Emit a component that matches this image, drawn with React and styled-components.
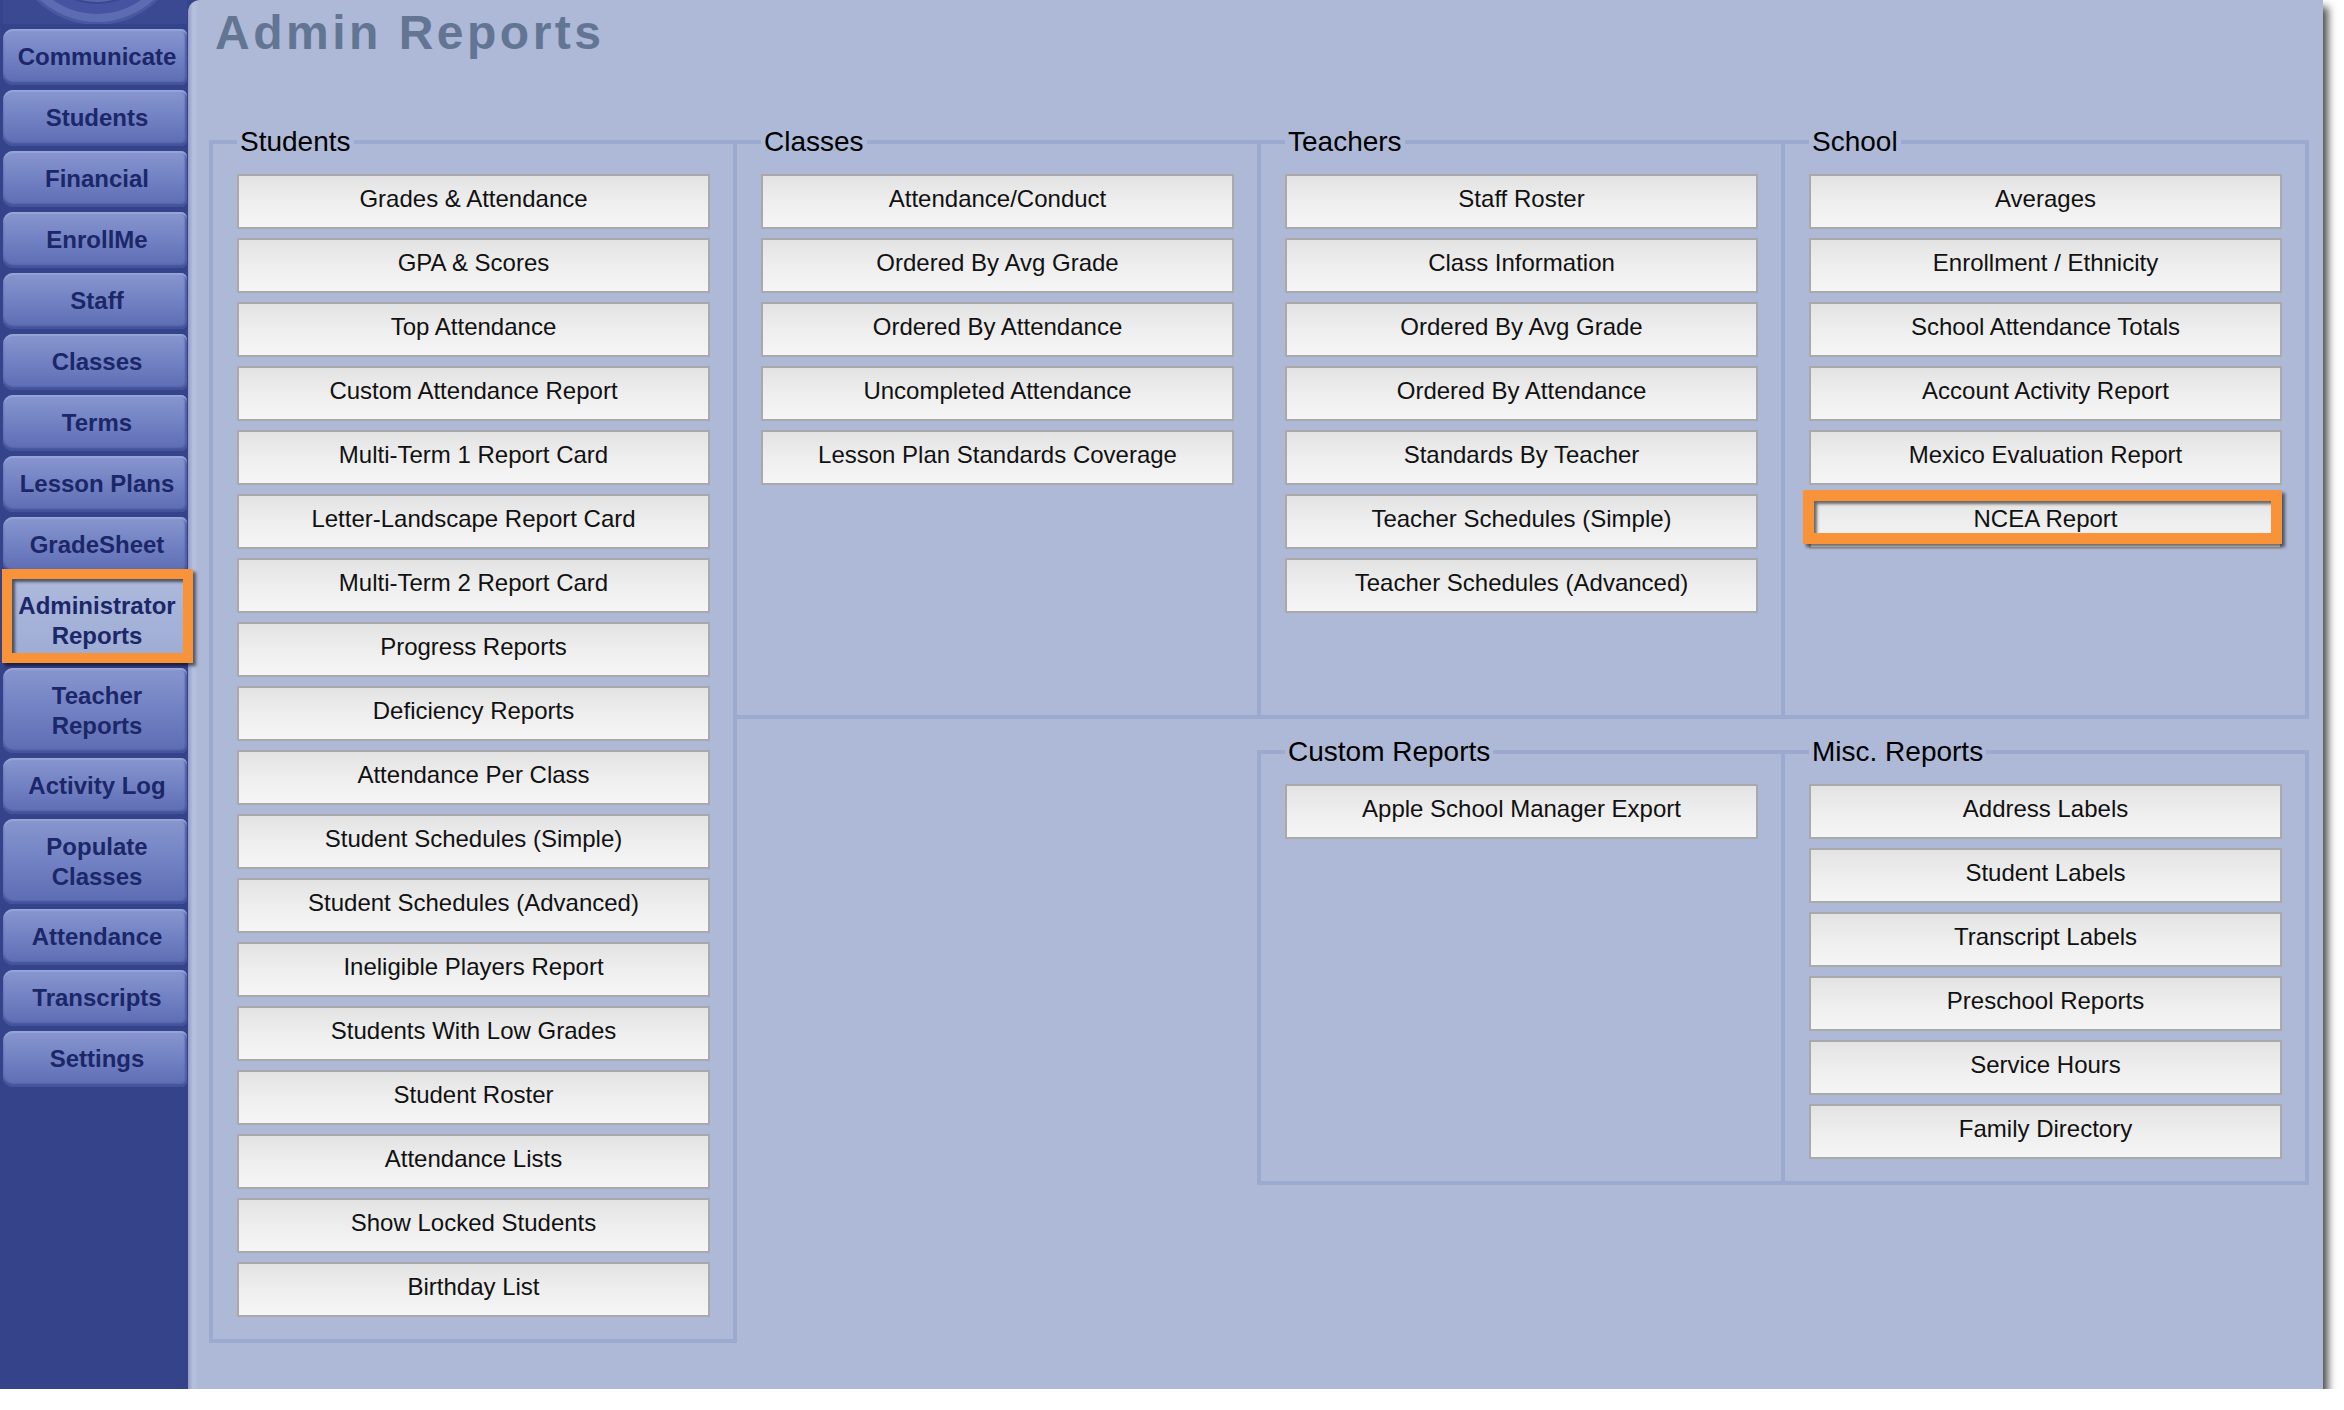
import React from "react";
import styled, { createGlobalStyle, css } from "styled-components";

const GlobalStyle = createGlobalStyle`
  html, body { margin: 0; padding: 0; background: #ffffff; }
  body { font-family: "Liberation Sans", Arial, sans-serif; }
  * { box-sizing: border-box; }
`;

const Window = styled.div`
  display: grid;
  grid-template-columns: 188px 2135px;
  width: 2323px;
  height: 1389px;
  background: #35438a;
  box-shadow: 5px 7px 8px rgba(0, 0, 0, 0.7);
`;

const Sidebar = styled.nav`
  display: flex;
  flex-direction: column;
  gap: 5px;
  padding: 0 1px 0 3px;
  background: #35438a;
`;

const LogoWrap = styled.div`
  height: 24px;
  overflow: hidden;
`;

const orangeFrame = css`
  &::after {
    content: "";
    position: absolute;
    border: 10px solid #f8933a;
    box-shadow: 3px 3px 3px rgba(0, 0, 0, 0.55), inset 3px 3px 3px rgba(0, 0, 0, 0.55);
    pointer-events: none;
  }
`;

const NavButton = styled.button`
  position: relative;
  height: ${(p) => (p.$tall ? 85 : 56)}px;
  border: none;
  padding: 0 0 0 4px;
  border-radius: 10px 6px 6px 10px;
  background: linear-gradient(#8896cf 0%, #7483c4 45%, #5d6cb3 100%);
  box-shadow: inset 0 -3px 2px #44529b, inset 0 2px 1px #97a4d9, inset -2px 0 2px #4f5da6;
  display: flex;
  flex-direction: column;
  align-items: center;
  justify-content: center;
  font-family: "Liberation Sans", Arial, sans-serif;
  font-weight: bold;
  font-size: 24px;
  line-height: 30px;
  color: #1b2768;
  cursor: pointer;

  ${(p) =>
    p.$active &&
    css`
      border-radius: 0;
      background: linear-gradient(#adb9dc, #9dabd4);
      box-shadow: none;
      ${orangeFrame}
      &::after {
        top: -9px;
        left: -1px;
        right: -6px;
        bottom: 0;
      }
    `}
`;

const Panel = styled.main`
  display: flex;
  flex-direction: column;
  padding: 5px 0 0 21px;
  border-top-left-radius: 12px;
  background: linear-gradient(90deg, #919dc8 0px, #b6c1de 5px, #adb9d6 11px);
`;

const Title = styled.h1`
  margin: 0 0 0 6px;
  font-family: "Liberation Sans", Arial, sans-serif;
  font-weight: bold;
  font-size: 48px;
  line-height: 56px;
  letter-spacing: 3.5px;
  color: #627593;
`;

const ReportGrid = styled.div`
  margin-top: 65px;
  display: grid;
  grid-template-columns: repeat(4, 524px);
  grid-template-rows: 593px auto;
`;

const LowerRow = styled.div`
  grid-column: 3 / span 2;
  grid-row: 2;
  align-self: start;
  margin-top: 17px;
  display: grid;
  grid-template-columns: repeat(2, 524px);
  align-items: stretch;
`;

const Group = styled.fieldset`
  margin: 0 -4px 0 0;
  min-width: 0;
  padding: 16px 23px 22px 24px;
  border: 4px solid #9caad0;
  grid-column: ${(p) => p.$col || "auto"};
  grid-row: ${(p) => p.$row || "auto"};
`;

const Legend = styled.legend`
  padding: 0 3px;
  font-family: "Liberation Sans", Arial, sans-serif;
  font-size: 28px;
  line-height: 32px;
  color: #000;
`;

const ButtonList = styled.div`
  display: flex;
  flex-direction: column;
  gap: 9px;
`;

const ReportButton = styled.button`
  position: relative;
  height: 55px;
  padding: 0 0 5px;
  border: 2px solid #a9a9a9;
  background: linear-gradient(#e3e3e3 0%, #efefef 55%, #f5f5f5 100%);
  font-family: "Liberation Sans", Arial, sans-serif;
  font-size: 24px;
  color: #111;
  cursor: pointer;

  ${(p) =>
    p.$flagged &&
    css`
      ${orangeFrame}
      &::after {
        border-width: 11px;
        top: -6px;
        left: -8px;
        right: -2px;
        bottom: 3px;
      }
    `}
`;

const navItems = [
  { lines: ["Communicate"] },
  { lines: ["Students"] },
  { lines: ["Financial"] },
  { lines: ["EnrollMe"] },
  { lines: ["Staff"] },
  { lines: ["Classes"] },
  { lines: ["Terms"] },
  { lines: ["Lesson Plans"] },
  { lines: ["GradeSheet"] },
  { lines: ["Administrator", "Reports"], active: true },
  { lines: ["Teacher", "Reports"] },
  { lines: ["Activity Log"] },
  { lines: ["Populate", "Classes"] },
  { lines: ["Attendance"] },
  { lines: ["Transcripts"] },
  { lines: ["Settings"] },
];

const upperGroups = [
  {
    title: "Students",
    col: "1",
    row: "1 / span 2",
    items: [
      "Grades & Attendance",
      "GPA & Scores",
      "Top Attendance",
      "Custom Attendance Report",
      "Multi-Term 1 Report Card",
      "Letter-Landscape Report Card",
      "Multi-Term 2 Report Card",
      "Progress Reports",
      "Deficiency Reports",
      "Attendance Per Class",
      "Student Schedules (Simple)",
      "Student Schedules (Advanced)",
      "Ineligible Players Report",
      "Students With Low Grades",
      "Student Roster",
      "Attendance Lists",
      "Show Locked Students",
      "Birthday List",
    ],
  },
  {
    title: "Classes",
    col: "2",
    row: "1",
    items: [
      "Attendance/Conduct",
      "Ordered By Avg Grade",
      "Ordered By Attendance",
      "Uncompleted Attendance",
      "Lesson Plan Standards Coverage",
    ],
  },
  {
    title: "Teachers",
    col: "3",
    row: "1",
    items: [
      "Staff Roster",
      "Class Information",
      "Ordered By Avg Grade",
      "Ordered By Attendance",
      "Standards By Teacher",
      "Teacher Schedules (Simple)",
      "Teacher Schedules (Advanced)",
    ],
  },
  {
    title: "School",
    col: "4",
    row: "1",
    flagged: "NCEA Report",
    items: [
      "Averages",
      "Enrollment / Ethnicity",
      "School Attendance Totals",
      "Account Activity Report",
      "Mexico Evaluation Report",
      "NCEA Report",
    ],
  },
];

const lowerGroups = [
  {
    title: "Custom Reports",
    items: ["Apple School Manager Export"],
  },
  {
    title: "Misc. Reports",
    items: [
      "Address Labels",
      "Student Labels",
      "Transcript Labels",
      "Preschool Reports",
      "Service Hours",
      "Family Directory",
    ],
  },
];

function Logo() {
  return (
    <LogoWrap>
      <svg width="184" height="24" viewBox="0 0 184 24">
        <rect width="184" height="24" fill="#3b4993" />
        <circle cx="94" cy="-62" r="87" fill="#4a58a2" />
        <circle cx="94" cy="-62" r="84" fill="#5d6bb2" />
        <circle cx="94" cy="-62" r="76" fill="#4653a0" />
        <circle cx="94" cy="-62" r="66" fill="#3a4793" />
        <circle cx="94" cy="-62" r="64" fill="#5866ae" />
        <circle cx="94" cy="-62" r="61" fill="#35428c" />
      </svg>
    </LogoWrap>
  );
}

function ReportGroup({ group }) {
  return (
    <Group $col={group.col} $row={group.row}>
      <Legend>{group.title}</Legend>
      <ButtonList>
        {group.items.map((it) => (
          <ReportButton key={it} $flagged={group.flagged === it}>
            {it}
          </ReportButton>
        ))}
      </ButtonList>
    </Group>
  );
}

export default function App() {
  return (
    <>
      <GlobalStyle />
      <Window>
        <Sidebar>
          <Logo />
          {navItems.map((item) => (
            <NavButton
              key={item.lines.join(" ")}
              $tall={item.lines.length > 1}
              $active={item.active}
            >
              {item.lines.map((l) => (
                <span key={l}>{l}</span>
              ))}
            </NavButton>
          ))}
        </Sidebar>
        <Panel>
          <Title>Admin Reports</Title>
          <ReportGrid>
            {upperGroups.map((g) => (
              <ReportGroup key={g.title} group={g} />
            ))}
            <LowerRow>
              {lowerGroups.map((g) => (
                <ReportGroup key={g.title} group={g} />
              ))}
            </LowerRow>
          </ReportGrid>
        </Panel>
      </Window>
    </>
  );
}
